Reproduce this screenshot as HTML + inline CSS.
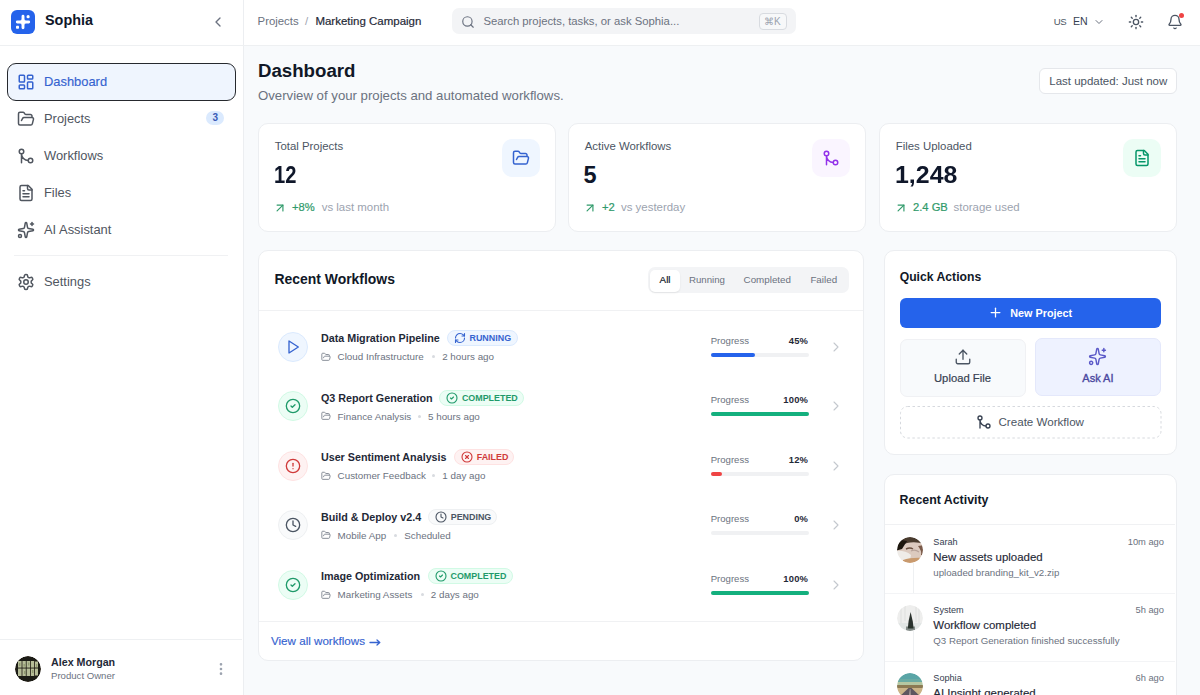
<!DOCTYPE html>
<html><head><meta charset="utf-8">
<style>
*{box-sizing:border-box;margin:0;padding:0}
html,body{width:1200px;height:695px;overflow:hidden}
body{font-family:"Liberation Sans",sans-serif;background:#f8fafc;position:relative}
.t{position:absolute;white-space:nowrap}
.r{position:absolute}
.ic{position:absolute;overflow:visible}
</style></head><body>

<div class="r" style="left:0px;top:0px;width:244px;height:695px;background:#fff;border-right:1px solid #eceef1"></div>
<div class="r" style="left:244px;top:0px;width:956px;height:45px;background:#fff"></div>
<div class="r" style="left:0px;top:45px;width:1200px;height:1px;background:#eef0f2"></div>
<div class="r" style="left:11px;top:10px;width:24px;height:24px;background:#2563eb;border-radius:6px"></div>
<svg class="ic" style="left:11px;top:10px;width:24px;height:24px" viewBox="0 0 24 24"><path d="M6.3 12H17.7M12 6.3V17.7" stroke="#fff" stroke-width="2.9" stroke-linecap="round"/><path fill="#fff" d="M12 7.8 Q12.6 11.4 16.2 12 Q12.6 12.6 12 16.2 Q11.4 12.6 7.8 12 Q11.4 11.4 12 7.8Z" stroke="#fff" stroke-width="1" stroke-linejoin="round"/><circle cx="17.1" cy="6.7" r="1.6" fill="#fff"/><rect x="5" y="15.7" width="3" height="3" rx="0.7" fill="#fff"/></svg>
<div class="t" style="left:45.00px;top:13.21px;font-size:14.4px;line-height:14.4px;font-weight:bold;color:#0f172a;">Sophia</div>
<svg class="ic" style="left:210.3px;top:14px;width:16px;height:16px" viewBox="0 0 24 24" fill="none" stroke="#6b7280" stroke-width="2" stroke-linecap="round" stroke-linejoin="round"><path d="m15 18-6-6 6-6"/></svg>
<div class="r" style="left:6.5px;top:63px;width:229px;height:37.5px;background:#eff5fe;border:1.5px solid #26292e;border-radius:9px"></div>
<svg class="ic" style="left:16.5px;top:73px;width:18px;height:18px" viewBox="0 0 24 24" fill="none" stroke="#3563d0" stroke-width="2" stroke-linecap="round" stroke-linejoin="round"><rect width="7" height="9" x="3" y="3" rx="1"/><rect width="7" height="5" x="14" y="3" rx="1"/><rect width="7" height="9" x="14" y="12" rx="1"/><rect width="7" height="5" x="3" y="16" rx="1"/></svg>
<div class="t" style="left:44.00px;top:76.48px;font-size:12.9px;line-height:12.9px;font-weight:normal;color:#3563d0;-webkit-text-stroke:0.15px #3563d0">Dashboard</div>
<svg class="ic" style="left:16.5px;top:110px;width:18px;height:18px" viewBox="0 0 24 24" fill="none" stroke="#50565f" stroke-width="2" stroke-linecap="round" stroke-linejoin="round"><path d="m6 14 1.5-2.9A2 2 0 0 1 9.24 10H20a2 2 0 0 1 1.94 2.5l-1.54 6a2 2 0 0 1-1.95 1.5H4a2 2 0 0 1-2-2V5a2 2 0 0 1 2-2h3.9a2 2 0 0 1 1.69.9l.81 1.2a2 2 0 0 0 1.67.9H18a2 2 0 0 1 2 2v2"/></svg>
<div class="t" style="left:44.00px;top:113.48px;font-size:12.9px;line-height:12.9px;font-weight:normal;color:#50565f;">Projects</div>
<svg class="ic" style="left:16.5px;top:147px;width:18px;height:18px" viewBox="0 0 24 24" fill="none" stroke="#50565f" stroke-width="2" stroke-linecap="round" stroke-linejoin="round"><circle cx="18" cy="18" r="3"/><circle cx="6" cy="6" r="3"/><path d="M6 21V9a9 9 0 0 0 9 9"/></svg>
<div class="t" style="left:44.00px;top:150.48px;font-size:12.9px;line-height:12.9px;font-weight:normal;color:#50565f;">Workflows</div>
<svg class="ic" style="left:16.5px;top:184px;width:18px;height:18px" viewBox="0 0 24 24" fill="none" stroke="#50565f" stroke-width="2" stroke-linecap="round" stroke-linejoin="round"><path d="M15 2H6a2 2 0 0 0-2 2v16a2 2 0 0 0 2 2h12a2 2 0 0 0 2-2V7Z"/><path d="M14 2v4a2 2 0 0 0 2 2h4"/><path d="M10 9H8"/><path d="M16 13H8"/><path d="M16 17H8"/></svg>
<div class="t" style="left:44.00px;top:187.48px;font-size:12.9px;line-height:12.9px;font-weight:normal;color:#50565f;">Files</div>
<svg class="ic" style="left:16.5px;top:221px;width:18px;height:18px" viewBox="0 0 24 24" fill="none" stroke="#50565f" stroke-width="2" stroke-linecap="round" stroke-linejoin="round"><path d="M11.017 2.814a1 1 0 0 1 1.966 0l1.051 5.558a2 2 0 0 0 1.594 1.594l5.558 1.051a1 1 0 0 1 0 1.966l-5.558 1.051a2 2 0 0 0-1.594 1.594l-1.051 5.558a1 1 0 0 1-1.966 0l-1.051-5.558a2 2 0 0 0-1.594-1.594l-5.558-1.051a1 1 0 0 1 0-1.966l5.558-1.051a2 2 0 0 0 1.594-1.594z"/><path d="M20 2v4"/><path d="M22 4h-4"/><circle cx="4" cy="20" r="2"/></svg>
<div class="t" style="left:44.00px;top:224.48px;font-size:12.9px;line-height:12.9px;font-weight:normal;color:#50565f;">AI Assistant</div>
<div class="r" style="left:206px;top:110.5px;width:18px;height:14px;background:#dbeafe;border-radius:7px"></div>
<div class="t" style="left:212.50px;top:112.63px;font-size:10px;line-height:10px;font-weight:bold;color:#3a5bb5;">3</div>
<div class="r" style="left:14px;top:255px;width:214px;height:1px;background:#f0f1f3"></div>
<svg class="ic" style="left:16.5px;top:273px;width:18px;height:18px" viewBox="0 0 24 24" fill="none" stroke="#50565f" stroke-width="2" stroke-linecap="round" stroke-linejoin="round"><path d="M12.22 2h-.44a2 2 0 0 0-2 2v.18a2 2 0 0 1-1 1.73l-.43.25a2 2 0 0 1-2 0l-.15-.08a2 2 0 0 0-2.73.73l-.22.38a2 2 0 0 0 .73 2.73l.15.1a2 2 0 0 1 1 1.72v.51a2 2 0 0 1-1 1.74l-.15.09a2 2 0 0 0-.73 2.73l.22.38a2 2 0 0 0 2.73.73l.15-.08a2 2 0 0 1 2 0l.43.25a2 2 0 0 1 1 1.73V20a2 2 0 0 0 2 2h.44a2 2 0 0 0 2-2v-.18a2 2 0 0 1 1-1.73l.43-.25a2 2 0 0 1 2 0l.15.08a2 2 0 0 0 2.73-.73l.22-.39a2 2 0 0 0-.73-2.73l-.15-.08a2 2 0 0 1-1-1.74v-.5a2 2 0 0 1 1-1.74l.15-.09a2 2 0 0 0 .73-2.73l-.22-.38a2 2 0 0 0-2.73-.73l-.15.08a2 2 0 0 1-2 0l-.43-.25a2 2 0 0 1-1-1.73V4a2 2 0 0 0-2-2z"/><circle cx="12" cy="12" r="3"/></svg>
<div class="t" style="left:44.00px;top:276.48px;font-size:12.9px;line-height:12.9px;font-weight:normal;color:#50565f;">Settings</div>
<div class="r" style="left:0px;top:639px;width:242px;height:1px;background:#eef0f2"></div>
<svg class="ic" style="left:14.5px;top:655.6px;width:26px;height:26px;border-radius:50%;overflow:hidden" viewBox="0 0 26 26"><defs><filter id="bl_alex" x="-10%" y="-10%" width="120%" height="120%"><feGaussianBlur stdDeviation="0.6"/></filter><clipPath id="cp_alex"><circle cx="13" cy="13" r="13"/></clipPath></defs><g clip-path="url(#cp_alex)"><g filter="url(#bl_alex)"><circle cx="13" cy="13" r="13" fill="#1e1a12"/><g fill="#c3cba4" opacity="0.92"><rect x="3" y="5" width="3.6" height="6.6"/><rect x="7.4" y="5" width="3.4" height="6.6"/><rect x="11.6" y="5" width="3.4" height="6.6"/><rect x="15.8" y="5" width="3.4" height="6.6"/><rect x="20" y="5.5" width="3" height="6"/><rect x="3" y="12.5" width="3.6" height="7.5"/><rect x="7.4" y="12.5" width="3.4" height="7.5"/><rect x="11.6" y="12.5" width="3.4" height="7.5"/><rect x="15.8" y="12.5" width="3.4" height="7.5"/><rect x="20" y="12.5" width="3" height="7"/></g><g fill="#7a8558" opacity="0.6"><rect x="4" y="7" width="1.4" height="3"/><rect x="8.5" y="8" width="1.4" height="2.5"/><rect x="13" y="6.5" width="1.4" height="3"/><rect x="17" y="14" width="1.4" height="3"/><rect x="9" y="15" width="1.4" height="3"/><rect x="21" y="8" width="1.2" height="3"/></g></g></g></svg>
<div class="t" style="left:51.00px;top:657.34px;font-size:10.7px;line-height:10.7px;font-weight:bold;color:#1f2937;">Alex Morgan</div>
<div class="t" style="left:51.00px;top:670.87px;font-size:9.6px;line-height:9.6px;font-weight:normal;color:#6b7280;">Product Owner</div>
<svg class="ic" style="left:212.6px;top:661px;width:16px;height:16px" viewBox="0 0 24 24" fill="none" stroke="#9ca3af" stroke-width="2" stroke-linecap="round" stroke-linejoin="round"><circle cx="12" cy="12" r="1"/><circle cx="12" cy="5" r="1"/><circle cx="12" cy="19" r="1"/></svg>
<div class="t" style="left:257.60px;top:15.99px;font-size:11.35px;line-height:11.35px;font-weight:normal;color:#6b7280;">Projects</div>
<div class="t" style="left:305.00px;top:15.99px;font-size:11.35px;line-height:11.35px;font-weight:normal;color:#9ca3af;">/</div>
<div class="t" style="left:315.40px;top:15.87px;font-size:11.49px;line-height:11.49px;font-weight:normal;color:#1f2937;-webkit-text-stroke:0.2px #1f2937">Marketing Campaign</div>
<div class="r" style="left:452px;top:8px;width:344px;height:26px;background:#f3f4f6;border-radius:7px"></div>
<svg class="ic" style="left:461px;top:15px;width:14px;height:14px" viewBox="0 0 24 24" fill="none" stroke="#6b7280" stroke-width="2" stroke-linecap="round" stroke-linejoin="round"><circle cx="11" cy="11" r="8"/><path d="m21 21-4.3-4.3"/></svg>
<div class="t" style="left:483.40px;top:16.43px;font-size:11.3px;line-height:11.3px;font-weight:normal;color:#6b7280;">Search projects, tasks, or ask Sophia...</div>
<div class="r" style="left:759px;top:13px;width:28px;height:17px;border:1px solid #d8dbe0;border-radius:4px;background:#f7f8f9"></div>
<div class="t" style="left:764.00px;top:16.53px;font-size:10px;line-height:10px;font-weight:normal;color:#9ca3af;">&#8984;K</div>
<div class="t" style="left:1053.70px;top:17.17px;font-size:9.6px;line-height:9.6px;font-weight:normal;color:#4b5563;letter-spacing:-0.4px">US</div>
<div class="t" style="left:1073.00px;top:16.32px;font-size:10.6px;line-height:10.6px;font-weight:normal;color:#374151;">EN</div>
<svg class="ic" style="left:1093.3px;top:16px;width:12px;height:12px" viewBox="0 0 24 24" fill="none" stroke="#6b7280" stroke-width="2" stroke-linecap="round" stroke-linejoin="round"><path d="m6 9 6 6 6-6"/></svg>
<svg class="ic" style="left:1128px;top:14px;width:16px;height:16px" viewBox="0 0 24 24" fill="none" stroke="#4b5563" stroke-width="2" stroke-linecap="round" stroke-linejoin="round"><circle cx="12" cy="12" r="4"/><path d="M12 2v2"/><path d="M12 20v2"/><path d="m4.93 4.93 1.41 1.41"/><path d="m17.66 17.66 1.41 1.41"/><path d="M2 12h2"/><path d="M20 12h2"/><path d="m6.34 17.66-1.41 1.41"/><path d="m19.07 4.93-1.41 1.41"/></svg>
<svg class="ic" style="left:1167px;top:14px;width:16px;height:16px" viewBox="0 0 24 24" fill="none" stroke="#4b5563" stroke-width="2" stroke-linecap="round" stroke-linejoin="round"><path d="M10.268 21a2 2 0 0 0 3.464 0"/><path d="M3.262 15.326A1 1 0 0 0 4 17h16a1 1 0 0 0 .74-1.673C19.41 13.956 18 12.499 18 8A6 6 0 0 0 6 8c0 4.499-1.411 5.956-2.738 7.326"/></svg>
<div class="r" style="left:1178.5px;top:12.8px;width:5px;height:5px;background:#ef4444;border-radius:50%;border:0px solid #fff"></div>
<div class="t" style="left:258.00px;top:61.69px;font-size:18.67px;line-height:18.67px;font-weight:bold;color:#111827;">Dashboard</div>
<div class="t" style="left:258.00px;top:89.12px;font-size:13.2px;line-height:13.2px;font-weight:normal;color:#6b7280;">Overview of your projects and automated workflows.</div>
<div class="r" style="left:1039px;top:68px;width:138px;height:26px;background:#fff;border:1px solid #e5e7eb;border-radius:6px"></div>
<div class="t" style="left:1049.30px;top:75.99px;font-size:11.47px;line-height:11.47px;font-weight:normal;color:#4b5563;">Last updated: Just now</div>
<div class="r" style="left:258px;top:123px;width:298px;height:109px;background:#fff;border:1px solid #eceef1;border-radius:10px"></div>
<div class="t" style="left:274.70px;top:140.74px;font-size:11.41px;line-height:11.41px;font-weight:normal;color:#4b5563;">Total Projects</div>
<div class="t" style="left:273.50px;top:164.30px;font-size:23.5px;line-height:23.5px;font-weight:bold;color:#0f172a;transform:scaleX(0.857);transform-origin:0 0">12</div>
<svg class="ic" style="left:273.3px;top:200.8px;width:14px;height:14px" viewBox="0 0 24 24" fill="none" stroke="#2f9a6a" stroke-width="2" stroke-linecap="round" stroke-linejoin="round"><path d="M7 7h10v10"/><path d="M7 17 17 7"/></svg>
<div class="t" style="left:292.00px;top:202.23px;font-size:11.19px;line-height:11.19px;font-weight:normal;color:#2f9a6a;-webkit-text-stroke:0.2px #2f9a6a">+8%</div>
<!--sub-->
<div class="t" style="left:321.70px;top:202.01px;font-size:11.44px;line-height:11.44px;font-weight:normal;color:#9ca3af;">vs last month</div>
<div class="r" style="left:502px;top:139px;width:38px;height:38px;background:#eff6ff;border-radius:10px"></div>
<svg class="ic" style="left:512px;top:149px;width:18px;height:18px" viewBox="0 0 24 24" fill="none" stroke="#3563d0" stroke-width="2" stroke-linecap="round" stroke-linejoin="round"><path d="m6 14 1.5-2.9A2 2 0 0 1 9.24 10H20a2 2 0 0 1 1.94 2.5l-1.54 6a2 2 0 0 1-1.95 1.5H4a2 2 0 0 1-2-2V5a2 2 0 0 1 2-2h3.9a2 2 0 0 1 1.69.9l.81 1.2a2 2 0 0 0 1.67.9H18a2 2 0 0 1 2 2v2"/></svg>
<div class="r" style="left:568px;top:123px;width:298px;height:109px;background:#fff;border:1px solid #eceef1;border-radius:10px"></div>
<div class="t" style="left:584.70px;top:140.74px;font-size:11.41px;line-height:11.41px;font-weight:normal;color:#4b5563;">Active Workflows</div>
<div class="t" style="left:583.50px;top:164.30px;font-size:23.5px;line-height:23.5px;font-weight:bold;color:#0f172a;transform:scaleX(1.0);transform-origin:0 0">5</div>
<svg class="ic" style="left:583.3px;top:200.8px;width:14px;height:14px" viewBox="0 0 24 24" fill="none" stroke="#2f9a6a" stroke-width="2" stroke-linecap="round" stroke-linejoin="round"><path d="M7 7h10v10"/><path d="M7 17 17 7"/></svg>
<div class="t" style="left:602.00px;top:202.23px;font-size:11.19px;line-height:11.19px;font-weight:normal;color:#2f9a6a;-webkit-text-stroke:0.2px #2f9a6a">+2</div>
<!--sub-->
<div class="t" style="left:621.00px;top:202.01px;font-size:11.44px;line-height:11.44px;font-weight:normal;color:#9ca3af;">vs yesterday</div>
<div class="r" style="left:812px;top:139px;width:38px;height:38px;background:#faf5ff;border-radius:10px"></div>
<svg class="ic" style="left:822px;top:149px;width:18px;height:18px" viewBox="0 0 24 24" fill="none" stroke="#9333ea" stroke-width="2" stroke-linecap="round" stroke-linejoin="round"><circle cx="18" cy="18" r="3"/><circle cx="6" cy="6" r="3"/><path d="M6 21V9a9 9 0 0 0 9 9"/></svg>
<div class="r" style="left:879px;top:123px;width:298px;height:109px;background:#fff;border:1px solid #eceef1;border-radius:10px"></div>
<div class="t" style="left:895.70px;top:140.74px;font-size:11.41px;line-height:11.41px;font-weight:normal;color:#4b5563;">Files Uploaded</div>
<div class="t" style="left:894.50px;top:164.30px;font-size:23.5px;line-height:23.5px;font-weight:bold;color:#0f172a;transform:scaleX(1.06);transform-origin:0 0">1,248</div>
<svg class="ic" style="left:894.3px;top:200.8px;width:14px;height:14px" viewBox="0 0 24 24" fill="none" stroke="#2f9a6a" stroke-width="2" stroke-linecap="round" stroke-linejoin="round"><path d="M7 7h10v10"/><path d="M7 17 17 7"/></svg>
<div class="t" style="left:913.00px;top:202.23px;font-size:11.19px;line-height:11.19px;font-weight:normal;color:#2f9a6a;-webkit-text-stroke:0.2px #2f9a6a">2.4 GB</div>
<!--sub-->
<div class="t" style="left:953.50px;top:202.01px;font-size:11.44px;line-height:11.44px;font-weight:normal;color:#9ca3af;">storage used</div>
<div class="r" style="left:1123px;top:139px;width:38px;height:38px;background:#ecfdf5;border-radius:10px"></div>
<svg class="ic" style="left:1133px;top:149px;width:18px;height:18px" viewBox="0 0 24 24" fill="none" stroke="#059669" stroke-width="2" stroke-linecap="round" stroke-linejoin="round"><path d="M15 2H6a2 2 0 0 0-2 2v16a2 2 0 0 0 2 2h12a2 2 0 0 0 2-2V7Z"/><path d="M14 2v4a2 2 0 0 0 2 2h4"/><path d="M10 9H8"/><path d="M16 13H8"/><path d="M16 17H8"/></svg>
<div class="r" style="left:258px;top:250px;width:606px;height:411px;background:#fff;border:1px solid #eceef1;border-radius:10px"></div>
<div class="t" style="left:274.40px;top:272.60px;font-size:13.94px;line-height:13.94px;font-weight:bold;color:#111827;">Recent Workflows</div>
<div class="r" style="left:648px;top:267px;width:201px;height:26px;background:#f3f4f6;border-radius:7px"></div>
<div class="r" style="left:650px;top:269.5px;width:29.5px;height:22px;background:#fff;border-radius:5px;box-shadow:0 1px 2px rgba(0,0,0,.08)"></div>
<div class="t" style="left:659.60px;top:274.70px;font-size:9.8px;line-height:9.8px;font-weight:normal;color:#111827;-webkit-text-stroke:0.2px #111827">All</div>
<div class="t" style="left:689.00px;top:274.82px;font-size:9.66px;line-height:9.66px;font-weight:normal;color:#6b7280;">Running</div>
<div class="t" style="left:743.60px;top:274.70px;font-size:9.8px;line-height:9.8px;font-weight:normal;color:#6b7280;">Completed</div>
<div class="t" style="left:810.40px;top:274.70px;font-size:9.8px;line-height:9.8px;font-weight:normal;color:#6b7280;">Failed</div>
<div class="r" style="left:259px;top:310px;width:604px;height:1px;background:#f0f1f3"></div>
<!--rows-->
<div class="r" style="left:277.5px;top:331.5px;width:30px;height:30px;background:#eff6ff;border:1px solid #dbeafe;border-radius:50%"></div>
<svg class="ic" style="left:284.5px;top:338.5px;width:16px;height:16px" viewBox="0 0 24 24" fill="none" stroke="#3563d0" stroke-width="2" stroke-linecap="round" stroke-linejoin="round"><polygon points="6 3 20 12 6 21 6 3"/></svg>
<div class="t" style="left:320.90px;top:333.19px;font-size:10.76px;line-height:10.76px;font-weight:bold;color:#1f2937;">Data Migration Pipeline</div>
<div class="r" style="left:447px;top:330.2px;width:71px;height:16.2px;background:#eff6ff;border:1px solid #dbeafe;border-radius:9px"></div>
<svg class="ic" style="left:454px;top:332.2px;width:12px;height:12px" viewBox="0 0 24 24" fill="none" stroke="#3563d0" stroke-width="2.2" stroke-linecap="round" stroke-linejoin="round"><path d="M3 12a9 9 0 0 1 9-9 9.75 9.75 0 0 1 6.74 2.74L21 8"/><path d="M21 3v5h-5"/><path d="M21 12a9 9 0 0 1-9 9 9.75 9.75 0 0 1-6.74-2.74L3 16"/><path d="M8 16H3v5"/></svg>
<div class="t" style="left:469.50px;top:334.16px;font-size:8.91px;line-height:8.91px;font-weight:bold;color:#3563d0;">RUNNING</div>
<svg class="ic" style="left:320.5px;top:351.5px;width:10px;height:10px" viewBox="0 0 24 24" fill="none" stroke="#858b95" stroke-width="2.3" stroke-linecap="round" stroke-linejoin="round"><path d="m6 14 1.5-2.9A2 2 0 0 1 9.24 10H20a2 2 0 0 1 1.94 2.5l-1.54 6a2 2 0 0 1-1.95 1.5H4a2 2 0 0 1-2-2V5a2 2 0 0 1 2-2h3.9a2 2 0 0 1 1.69.9l.81 1.2a2 2 0 0 0 1.67.9H18a2 2 0 0 1 2 2v2"/></svg>
<div class="t" style="left:337.60px;top:352.19px;font-size:9.82px;line-height:9.82px;font-weight:normal;color:#6b7280;">Cloud Infrastructure</div>
<div class="r" style="left:432.2px;top:355.0px;width:3px;height:3px;background:#d8dbe0;border-radius:50%"></div>
<div class="t" style="left:442.20px;top:352.19px;font-size:9.82px;line-height:9.82px;font-weight:normal;color:#6b7280;">2 hours ago</div>
<div class="t" style="left:710.70px;top:335.60px;font-size:9.57px;line-height:9.57px;font-weight:normal;color:#6b7280;">Progress</div>
<div class="t" style="right:391.79999999999995px;top:335.94px;font-size:9.4px;line-height:9.4px;font-weight:bold;letter-spacing:0.25px;color:#1f2937">45%</div>
<div class="r" style="left:710.5px;top:352.7px;width:98px;height:4.3px;background:#f0f1f3;border-radius:3px"></div>
<div class="r" style="left:710.5px;top:352.7px;width:44.1px;height:4.3px;background:#2563eb;border-radius:3px"></div>
<svg class="ic" style="left:827.7px;top:338.7px;width:16px;height:16px" viewBox="0 0 24 24" fill="none" stroke="#c4c8ce" stroke-width="1.6" stroke-linecap="round" stroke-linejoin="round"><path d="m9 18 6-6-6-6"/></svg>
<div class="r" style="left:277.5px;top:391.0px;width:30px;height:30px;background:#ecfdf5;border:1px solid #d1fae5;border-radius:50%"></div>
<svg class="ic" style="left:284.5px;top:398.0px;width:16px;height:16px" viewBox="0 0 24 24" fill="none" stroke="#1f9a6a" stroke-width="2" stroke-linecap="round" stroke-linejoin="round"><circle cx="12" cy="12" r="10"/><path d="m9 12 2 2 4-4"/></svg>
<div class="t" style="left:320.90px;top:392.69px;font-size:10.76px;line-height:10.76px;font-weight:bold;color:#1f2937;">Q3 Report Generation</div>
<div class="r" style="left:439.4px;top:389.7px;width:84.6px;height:16.2px;background:#ecfdf5;border:1px solid #d1fae5;border-radius:9px"></div>
<svg class="ic" style="left:446.4px;top:391.7px;width:12px;height:12px" viewBox="0 0 24 24" fill="none" stroke="#1f9a6a" stroke-width="2.2" stroke-linecap="round" stroke-linejoin="round"><circle cx="12" cy="12" r="10"/><path d="m9 12 2 2 4-4"/></svg>
<div class="t" style="left:461.90px;top:393.66px;font-size:8.91px;line-height:8.91px;font-weight:bold;color:#1f9a6a;">COMPLETED</div>
<svg class="ic" style="left:320.5px;top:411.0px;width:10px;height:10px" viewBox="0 0 24 24" fill="none" stroke="#858b95" stroke-width="2.3" stroke-linecap="round" stroke-linejoin="round"><path d="m6 14 1.5-2.9A2 2 0 0 1 9.24 10H20a2 2 0 0 1 1.94 2.5l-1.54 6a2 2 0 0 1-1.95 1.5H4a2 2 0 0 1-2-2V5a2 2 0 0 1 2-2h3.9a2 2 0 0 1 1.69.9l.81 1.2a2 2 0 0 0 1.67.9H18a2 2 0 0 1 2 2v2"/></svg>
<div class="t" style="left:337.60px;top:411.69px;font-size:9.82px;line-height:9.82px;font-weight:normal;color:#6b7280;">Finance Analysis</div>
<div class="r" style="left:418px;top:414.5px;width:3px;height:3px;background:#d8dbe0;border-radius:50%"></div>
<div class="t" style="left:428.00px;top:411.69px;font-size:9.82px;line-height:9.82px;font-weight:normal;color:#6b7280;">5 hours ago</div>
<div class="t" style="left:710.70px;top:395.10px;font-size:9.57px;line-height:9.57px;font-weight:normal;color:#6b7280;">Progress</div>
<div class="t" style="right:391.79999999999995px;top:395.44px;font-size:9.4px;line-height:9.4px;font-weight:bold;letter-spacing:0.25px;color:#1f2937">100%</div>
<div class="r" style="left:710.5px;top:412.2px;width:98px;height:4.3px;background:#f0f1f3;border-radius:3px"></div>
<div class="r" style="left:710.5px;top:412.2px;width:98.0px;height:4.3px;background:#14b07e;border-radius:3px"></div>
<svg class="ic" style="left:827.7px;top:398.2px;width:16px;height:16px" viewBox="0 0 24 24" fill="none" stroke="#c4c8ce" stroke-width="1.6" stroke-linecap="round" stroke-linejoin="round"><path d="m9 18 6-6-6-6"/></svg>
<div class="r" style="left:277.5px;top:450.5px;width:30px;height:30px;background:#fef2f2;border:1px solid #fee2e2;border-radius:50%"></div>
<svg class="ic" style="left:284.5px;top:457.5px;width:16px;height:16px" viewBox="0 0 24 24" fill="none" stroke="#d03a3a" stroke-width="2" stroke-linecap="round" stroke-linejoin="round"><circle cx="12" cy="12" r="10"/><line x1="12" x2="12" y1="8" y2="12"/><line x1="12" x2="12.01" y1="16" y2="16"/></svg>
<div class="t" style="left:320.90px;top:452.19px;font-size:10.76px;line-height:10.76px;font-weight:bold;color:#1f2937;">User Sentiment Analysis</div>
<div class="r" style="left:454.2px;top:449.2px;width:59.6px;height:16.2px;background:#fef2f2;border:1px solid #fee2e2;border-radius:9px"></div>
<svg class="ic" style="left:461.2px;top:451.2px;width:12px;height:12px" viewBox="0 0 24 24" fill="none" stroke="#d03a3a" stroke-width="2.2" stroke-linecap="round" stroke-linejoin="round"><circle cx="12" cy="12" r="10"/><path d="m15 9-6 6"/><path d="m9 9 6 6"/></svg>
<div class="t" style="left:476.70px;top:453.16px;font-size:8.91px;line-height:8.91px;font-weight:bold;color:#d03a3a;">FAILED</div>
<svg class="ic" style="left:320.5px;top:470.5px;width:10px;height:10px" viewBox="0 0 24 24" fill="none" stroke="#858b95" stroke-width="2.3" stroke-linecap="round" stroke-linejoin="round"><path d="m6 14 1.5-2.9A2 2 0 0 1 9.24 10H20a2 2 0 0 1 1.94 2.5l-1.54 6a2 2 0 0 1-1.95 1.5H4a2 2 0 0 1-2-2V5a2 2 0 0 1 2-2h3.9a2 2 0 0 1 1.69.9l.81 1.2a2 2 0 0 0 1.67.9H18a2 2 0 0 1 2 2v2"/></svg>
<div class="t" style="left:337.60px;top:471.19px;font-size:9.82px;line-height:9.82px;font-weight:normal;color:#6b7280;">Customer Feedback</div>
<div class="r" style="left:432.3px;top:474.0px;width:3px;height:3px;background:#d8dbe0;border-radius:50%"></div>
<div class="t" style="left:442.30px;top:471.19px;font-size:9.82px;line-height:9.82px;font-weight:normal;color:#6b7280;">1 day ago</div>
<div class="t" style="left:710.70px;top:454.60px;font-size:9.57px;line-height:9.57px;font-weight:normal;color:#6b7280;">Progress</div>
<div class="t" style="right:391.79999999999995px;top:454.94px;font-size:9.4px;line-height:9.4px;font-weight:bold;letter-spacing:0.25px;color:#1f2937">12%</div>
<div class="r" style="left:710.5px;top:471.7px;width:98px;height:4.3px;background:#f0f1f3;border-radius:3px"></div>
<div class="r" style="left:710.5px;top:471.7px;width:11.8px;height:4.3px;background:#ef4444;border-radius:3px"></div>
<svg class="ic" style="left:827.7px;top:457.7px;width:16px;height:16px" viewBox="0 0 24 24" fill="none" stroke="#c4c8ce" stroke-width="1.6" stroke-linecap="round" stroke-linejoin="round"><path d="m9 18 6-6-6-6"/></svg>
<div class="r" style="left:277.5px;top:510.0px;width:30px;height:30px;background:#f9fafb;border:1px solid #eef0f2;border-radius:50%"></div>
<svg class="ic" style="left:284.5px;top:517.0px;width:16px;height:16px" viewBox="0 0 24 24" fill="none" stroke="#4b5563" stroke-width="2" stroke-linecap="round" stroke-linejoin="round"><circle cx="12" cy="12" r="10"/><polyline points="12 6 12 12 16 14"/></svg>
<div class="t" style="left:320.90px;top:511.69px;font-size:10.76px;line-height:10.76px;font-weight:bold;color:#1f2937;">Build &amp; Deploy v2.4</div>
<div class="r" style="left:428.2px;top:508.7px;width:69.3px;height:16.2px;background:#f9fafb;border:1px solid #eef0f2;border-radius:9px"></div>
<svg class="ic" style="left:435.2px;top:510.7px;width:12px;height:12px" viewBox="0 0 24 24" fill="none" stroke="#4b5563" stroke-width="2.2" stroke-linecap="round" stroke-linejoin="round"><circle cx="12" cy="12" r="10"/><polyline points="12 6 12 12 16 14"/></svg>
<div class="t" style="left:450.70px;top:512.66px;font-size:8.91px;line-height:8.91px;font-weight:bold;color:#4b5563;">PENDING</div>
<svg class="ic" style="left:320.5px;top:530.0px;width:10px;height:10px" viewBox="0 0 24 24" fill="none" stroke="#858b95" stroke-width="2.3" stroke-linecap="round" stroke-linejoin="round"><path d="m6 14 1.5-2.9A2 2 0 0 1 9.24 10H20a2 2 0 0 1 1.94 2.5l-1.54 6a2 2 0 0 1-1.95 1.5H4a2 2 0 0 1-2-2V5a2 2 0 0 1 2-2h3.9a2 2 0 0 1 1.69.9l.81 1.2a2 2 0 0 0 1.67.9H18a2 2 0 0 1 2 2v2"/></svg>
<div class="t" style="left:337.60px;top:530.69px;font-size:9.82px;line-height:9.82px;font-weight:normal;color:#6b7280;">Mobile App</div>
<div class="r" style="left:394.3px;top:533.5px;width:3px;height:3px;background:#d8dbe0;border-radius:50%"></div>
<div class="t" style="left:404.30px;top:530.69px;font-size:9.82px;line-height:9.82px;font-weight:normal;color:#6b7280;">Scheduled</div>
<div class="t" style="left:710.70px;top:514.10px;font-size:9.57px;line-height:9.57px;font-weight:normal;color:#6b7280;">Progress</div>
<div class="t" style="right:391.79999999999995px;top:514.44px;font-size:9.4px;line-height:9.4px;font-weight:bold;letter-spacing:0.25px;color:#1f2937">0%</div>
<div class="r" style="left:710.5px;top:531.2px;width:98px;height:4.3px;background:#f0f1f3;border-radius:3px"></div>
<svg class="ic" style="left:827.7px;top:517.2px;width:16px;height:16px" viewBox="0 0 24 24" fill="none" stroke="#c4c8ce" stroke-width="1.6" stroke-linecap="round" stroke-linejoin="round"><path d="m9 18 6-6-6-6"/></svg>
<div class="r" style="left:277.5px;top:569.5px;width:30px;height:30px;background:#ecfdf5;border:1px solid #d1fae5;border-radius:50%"></div>
<svg class="ic" style="left:284.5px;top:576.5px;width:16px;height:16px" viewBox="0 0 24 24" fill="none" stroke="#1f9a6a" stroke-width="2" stroke-linecap="round" stroke-linejoin="round"><circle cx="12" cy="12" r="10"/><path d="m9 12 2 2 4-4"/></svg>
<div class="t" style="left:320.90px;top:571.19px;font-size:10.76px;line-height:10.76px;font-weight:bold;color:#1f2937;">Image Optimization</div>
<div class="r" style="left:428px;top:568.2px;width:84.7px;height:16.2px;background:#ecfdf5;border:1px solid #d1fae5;border-radius:9px"></div>
<svg class="ic" style="left:435px;top:570.2px;width:12px;height:12px" viewBox="0 0 24 24" fill="none" stroke="#1f9a6a" stroke-width="2.2" stroke-linecap="round" stroke-linejoin="round"><circle cx="12" cy="12" r="10"/><path d="m9 12 2 2 4-4"/></svg>
<div class="t" style="left:450.50px;top:572.16px;font-size:8.91px;line-height:8.91px;font-weight:bold;color:#1f9a6a;">COMPLETED</div>
<svg class="ic" style="left:320.5px;top:589.5px;width:10px;height:10px" viewBox="0 0 24 24" fill="none" stroke="#858b95" stroke-width="2.3" stroke-linecap="round" stroke-linejoin="round"><path d="m6 14 1.5-2.9A2 2 0 0 1 9.24 10H20a2 2 0 0 1 1.94 2.5l-1.54 6a2 2 0 0 1-1.95 1.5H4a2 2 0 0 1-2-2V5a2 2 0 0 1 2-2h3.9a2 2 0 0 1 1.69.9l.81 1.2a2 2 0 0 0 1.67.9H18a2 2 0 0 1 2 2v2"/></svg>
<div class="t" style="left:337.60px;top:590.19px;font-size:9.82px;line-height:9.82px;font-weight:normal;color:#6b7280;">Marketing Assets</div>
<div class="r" style="left:420.8px;top:593.0px;width:3px;height:3px;background:#d8dbe0;border-radius:50%"></div>
<div class="t" style="left:430.80px;top:590.19px;font-size:9.82px;line-height:9.82px;font-weight:normal;color:#6b7280;">2 days ago</div>
<div class="t" style="left:710.70px;top:573.60px;font-size:9.57px;line-height:9.57px;font-weight:normal;color:#6b7280;">Progress</div>
<div class="t" style="right:391.79999999999995px;top:573.94px;font-size:9.4px;line-height:9.4px;font-weight:bold;letter-spacing:0.25px;color:#1f2937">100%</div>
<div class="r" style="left:710.5px;top:590.7px;width:98px;height:4.3px;background:#f0f1f3;border-radius:3px"></div>
<div class="r" style="left:710.5px;top:590.7px;width:98.0px;height:4.3px;background:#14b07e;border-radius:3px"></div>
<svg class="ic" style="left:827.7px;top:576.7px;width:16px;height:16px" viewBox="0 0 24 24" fill="none" stroke="#c4c8ce" stroke-width="1.6" stroke-linecap="round" stroke-linejoin="round"><path d="m9 18 6-6-6-6"/></svg>
<div class="r" style="left:259px;top:621px;width:604px;height:1px;background:#f0f1f3"></div>
<div class="t" style="left:271.00px;top:635.17px;font-size:11.61px;line-height:11.61px;font-weight:normal;color:#3563d0;-webkit-text-stroke:0.15px #3563d0">View all workflows</div>
<svg class="ic" style="left:369px;top:638px;width:12px;height:8px" viewBox="0 0 12 8"><path d="M1 4.5H10.5M8 2L10.8 4.5L8 7" stroke="#3563d0" stroke-width="1.3" fill="none" stroke-linecap="round" stroke-linejoin="round"/></svg>
<div class="r" style="left:884px;top:250px;width:292.5px;height:205px;background:#fff;border:1px solid #eceef1;border-radius:10px"></div>
<div class="t" style="left:899.70px;top:271.38px;font-size:12.19px;line-height:12.19px;font-weight:bold;color:#111827;">Quick Actions</div>
<div class="r" style="left:899.7px;top:298px;width:261.5px;height:29.7px;background:#2563eb;border-radius:6px"></div>
<svg class="ic" style="left:988.3px;top:305.3px;width:15px;height:15px" viewBox="0 0 24 24" fill="none" stroke="#fff" stroke-width="2" stroke-linecap="round" stroke-linejoin="round"><path d="M5 12h14"/><path d="M12 5v14"/></svg>
<div class="t" style="left:1010.30px;top:307.66px;font-size:10.8px;line-height:10.8px;font-weight:bold;color:#fff;">New Project</div>
<div class="r" style="left:899.7px;top:338.5px;width:126px;height:58px;background:#f8fafc;border:1px solid #f0f1f4;border-radius:7px"></div>
<svg class="ic" style="left:953.5px;top:347.5px;width:18px;height:18px" viewBox="0 0 24 24" fill="none" stroke="#4b5563" stroke-width="1.8" stroke-linecap="round" stroke-linejoin="round"><path d="M21 15v4a2 2 0 0 1-2 2H5a2 2 0 0 1-2-2v-4"/><polyline points="17 8 12 3 7 8"/><line x1="12" x2="12" y1="3" y2="15"/></svg>
<div class="t" style="left:934.00px;top:373.27px;font-size:11.25px;line-height:11.25px;font-weight:normal;color:#374151;-webkit-text-stroke:0.2px #374151">Upload File</div>
<div class="r" style="left:1034.6px;top:338.3px;width:126.6px;height:58px;background:#eef2ff;border:1px solid #e4e8fb;border-radius:7px"></div>
<svg class="ic" style="left:1088px;top:346.5px;width:19px;height:19px" viewBox="0 0 24 24" fill="none" stroke="#5a58c8" stroke-width="1.8" stroke-linecap="round" stroke-linejoin="round"><path d="M11.017 2.814a1 1 0 0 1 1.966 0l1.051 5.558a2 2 0 0 0 1.594 1.594l5.558 1.051a1 1 0 0 1 0 1.966l-5.558 1.051a2 2 0 0 0-1.594 1.594l-1.051 5.558a1 1 0 0 1-1.966 0l-1.051-5.558a2 2 0 0 0-1.594-1.594l-5.558-1.051a1 1 0 0 1 0-1.966l5.558-1.051a2 2 0 0 0 1.594-1.594z"/><path d="M20 2v4"/><path d="M22 4h-4"/><circle cx="4" cy="20" r="2"/></svg>
<div class="t" style="left:1082.30px;top:373.19px;font-size:11px;line-height:11px;font-weight:normal;color:#4a489f;-webkit-text-stroke:0.35px #4a489f">Ask AI</div>
<svg class="ic" style="left:899.7px;top:406.3px;width:261.5px;height:32.5px" viewBox="0 0 261.5 32.5"><rect x="0.5" y="0.5" width="260.5" height="31.5" rx="7" fill="#fff" stroke="#d6d9de" stroke-width="1" stroke-dasharray="2.5 2.5"/></svg>
<svg class="ic" style="left:975.6px;top:414.2px;width:16px;height:16px" viewBox="0 0 24 24" fill="none" stroke="#374151" stroke-width="2" stroke-linecap="round" stroke-linejoin="round"><circle cx="18" cy="18" r="3"/><circle cx="6" cy="6" r="3"/><path d="M6 21V9a9 9 0 0 0 9 9"/></svg>
<div class="t" style="left:998.50px;top:416.48px;font-size:11.6px;line-height:11.6px;font-weight:normal;color:#4b5563;">Create Workflow</div>
<div class="r" style="left:884px;top:473.5px;width:292.5px;height:240px;background:#fff;border:1px solid #eceef1;border-radius:10px"></div>
<div class="t" style="left:899.60px;top:493.73px;font-size:12.37px;line-height:12.37px;font-weight:bold;color:#111827;">Recent Activity</div>
<div class="r" style="left:885px;top:524px;width:290px;height:1px;background:#f0f1f3"></div>
<div class="r" style="left:913px;top:563px;width:1px;height:30px;background:#eef0f2"></div>
<svg class="ic" style="left:897px;top:537px;width:26px;height:26px;border-radius:50%;overflow:hidden" viewBox="0 0 26 26"><defs><filter id="bl_sarah" x="-10%" y="-10%" width="120%" height="120%"><feGaussianBlur stdDeviation="0.6"/></filter><clipPath id="cp_sarah"><circle cx="13" cy="13" r="13"/></clipPath></defs><g clip-path="url(#cp_sarah)"><g filter="url(#bl_sarah)"><rect x="-2" y="-2" width="30" height="30" fill="#dccabf"/><path d="M-2 -2H28V7Q18 4 10 6L-2 11Z" fill="#4a3a2e"/><path d="M-2 2L10 4L5 12L-2 14Z" fill="#1a1411"/><path d="M-2 14Q8 13 14 18L12 28H-2Z" fill="#efece8"/><path d="M6 23Q14 20 28 21V28H6Z" fill="#c99a6e"/><path d="M9 12Q13 10 16 12" stroke="#6a5040" stroke-width="1.4" fill="none"/><path d="M21 9Q25 14 24 18L28 18V8Z" fill="#7a5a48"/><path d="M14 14Q18 12 22 15" stroke="#b8a39a" stroke-width="1.2" fill="none"/></g></g></svg>
<div class="t" style="left:933.30px;top:537.76px;font-size:9.14px;line-height:9.14px;font-weight:normal;color:#374151;">Sarah</div>
<div class="t" style="right:36px;top:537.80px;font-size:9.33px;line-height:9.33px;color:#6b7280">10m ago</div>
<div class="t" style="left:933.30px;top:552.31px;font-size:11.45px;line-height:11.45px;font-weight:normal;color:#1f2937;-webkit-text-stroke:0.15px #1f2937">New assets uploaded</div>
<div class="t" style="left:933.30px;top:568.29px;font-size:9.7px;line-height:9.7px;font-weight:normal;color:#6b7280;">uploaded branding_kit_v2.zip</div>
<div class="r" style="left:885px;top:593px;width:290px;height:1px;background:#f3f4f6"></div>
<div class="r" style="left:913px;top:631px;width:1px;height:30px;background:#eef0f2"></div>
<svg class="ic" style="left:897px;top:605px;width:26px;height:26px;border-radius:50%;overflow:hidden" viewBox="0 0 26 26"><defs><filter id="bl_system" x="-10%" y="-10%" width="120%" height="120%"><feGaussianBlur stdDeviation="0.6"/></filter><clipPath id="cp_system"><circle cx="13" cy="13" r="13"/></clipPath></defs><g clip-path="url(#cp_system)"><g filter="url(#bl_system)"><circle cx="13" cy="13" r="13" fill="#eeeeed"/><rect x="0" y="18" width="26" height="8" fill="#e2e6e5"/><path d="M4 0V18M8 0V16M19 0V17M22 0V18" stroke="#dedfde" stroke-width="1"/><path d="M13.6 7L15.8 16.5L16.6 23.5L10.8 23.5L11.6 16Z" fill="#2b322d"/><rect x="9" y="21.5" width="9" height="4.5" fill="#24302c" opacity="0.5"/></g></g></svg>
<div class="t" style="left:933.30px;top:605.76px;font-size:9.14px;line-height:9.14px;font-weight:normal;color:#374151;">System</div>
<div class="t" style="right:36px;top:605.80px;font-size:9.33px;line-height:9.33px;color:#6b7280">5h ago</div>
<div class="t" style="left:933.30px;top:620.31px;font-size:11.45px;line-height:11.45px;font-weight:normal;color:#1f2937;-webkit-text-stroke:0.15px #1f2937">Workflow completed</div>
<div class="t" style="left:933.30px;top:636.29px;font-size:9.7px;line-height:9.7px;font-weight:normal;color:#6b7280;">Q3 Report Generation finished successfully</div>
<div class="r" style="left:885px;top:661px;width:290px;height:1px;background:#f3f4f6"></div>
<svg class="ic" style="left:897px;top:673px;width:26px;height:26px;border-radius:50%;overflow:hidden" viewBox="0 0 26 26"><defs><filter id="bl_sophia" x="-10%" y="-10%" width="120%" height="120%"><feGaussianBlur stdDeviation="0.6"/></filter><clipPath id="cp_sophia"><circle cx="13" cy="13" r="13"/></clipPath></defs><g clip-path="url(#cp_sophia)"><g filter="url(#bl_sophia)"><rect width="26" height="26" fill="#6aaba3"/><rect y="0" width="26" height="6" fill="#5aa5a6"/><rect y="9" width="26" height="4" fill="#b5c7a2"/><rect y="12" width="26" height="4" fill="#8c7a52"/><rect y="15" width="26" height="11" fill="#cbb488"/><path d="M11.5 15L14.5 15L26 26L0 26Z" fill="#5d5660"/><path d="M12.8 16L13.5 16L14 26L11.5 26Z" fill="#a89c98"/></g></g></svg>
<div class="t" style="left:933.30px;top:673.76px;font-size:9.14px;line-height:9.14px;font-weight:normal;color:#374151;">Sophia</div>
<div class="t" style="right:36px;top:673.80px;font-size:9.33px;line-height:9.33px;color:#6b7280">6h ago</div>
<div class="t" style="left:933.30px;top:688.31px;font-size:11.45px;line-height:11.45px;font-weight:normal;color:#1f2937;-webkit-text-stroke:0.15px #1f2937">AI Insight generated</div>
</body></html>
